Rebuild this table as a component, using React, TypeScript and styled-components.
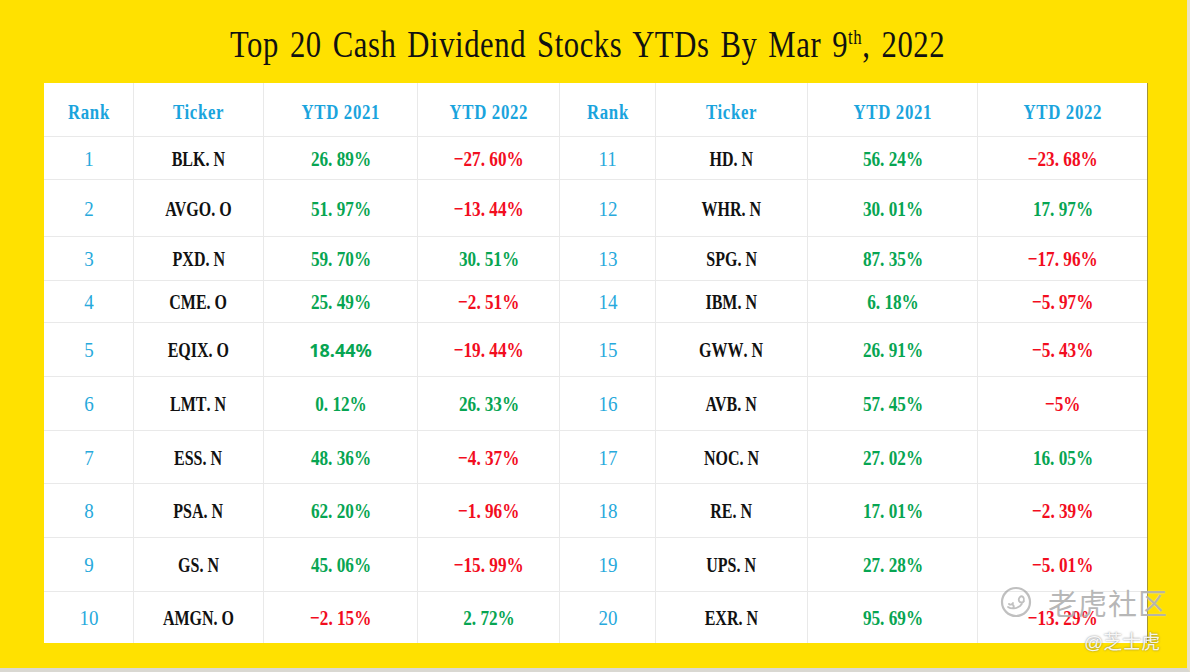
import React from 'react';
import styled, { createGlobalStyle } from 'styled-components';

type Kind = 'head' | 'rank' | 'ticker' | 'up' | 'down';

interface CellData {
  text: string;
  kind: Kind;
  plain?: boolean;
}

const GlobalStyle = createGlobalStyle`
  html, body {
    margin: 0;
    padding: 0;
    background: #ffe100;
  }
  * {
    box-sizing: border-box;
  }
`;

const colWidths = [90, 130, 154, 142, 96, 152, 170, 169];
const rowHeights = [54, 43, 57, 44, 42, 54, 54, 53, 54, 54, 51];

const heads = ['Rank', 'Ticker', 'YTD 2021', 'YTD 2022'];

const left: [string, string, string, string][] = [
  ['1', 'BLK.N', '26.89%', '-27.60%'],
  ['2', 'AVGO.O', '51.97%', '-13.44%'],
  ['3', 'PXD.N', '59.70%', '30.51%'],
  ['4', 'CME.O', '25.49%', '-2.51%'],
  ['5', 'EQIX.O', '18.44%', '-19.44%'],
  ['6', 'LMT.N', '0.12%', '26.33%'],
  ['7', 'ESS.N', '48.36%', '-4.37%'],
  ['8', 'PSA.N', '62.20%', '-1.96%'],
  ['9', 'GS.N', '45.06%', '-15.99%'],
  ['10', 'AMGN.O', '-2.15%', '2.72%'],
];

const right: [string, string, string, string][] = [
  ['11', 'HD.N', '56.24%', '-23.68%'],
  ['12', 'WHR.N', '30.01%', '17.97%'],
  ['13', 'SPG.N', '87.35%', '-17.96%'],
  ['14', 'IBM.N', '6.18%', '-5.97%'],
  ['15', 'GWW.N', '26.91%', '-5.43%'],
  ['16', 'AVB.N', '57.45%', '-5%'],
  ['17', 'NOC.N', '27.02%', '16.05%'],
  ['18', 'RE.N', '17.01%', '-2.39%'],
  ['19', 'UPS.N', '27.28%', '-5.01%'],
  ['20', 'EXR.N', '95.69%', '-13.29%'],
];

const pct = (v: string): CellData => ({
  text: v.replace('-', '\u2212'),
  kind: v.startsWith('-') ? 'down' : 'up',
});

const half = (r: [string, string, string, string]): CellData[] => [
  { text: r[0], kind: 'rank' },
  { text: r[1], kind: 'ticker' },
  pct(r[2]),
  pct(r[3]),
];

const rows: CellData[][] = [
  [...heads, ...heads].map((h) => ({ text: h, kind: 'head' as Kind })),
  ...left.map((r, i) => [...half(r), ...half(right[i])]),
];
// the 18.44% cell is typed in a different font in the source sheet
rows[5][2].plain = true;

const colors: Record<Kind, string> = {
  head: '#1aa4dd',
  rank: '#27a9dc',
  ticker: '#111111',
  up: '#07a552',
  down: '#f20d1e',
};

// the sheet font is a narrow, tall serif; squeeze Times to match
const squeeze: Record<Kind, string> = {
  head: 'scale(0.84, 1.08)',
  rank: 'scale(0.95, 1.08)',
  ticker: 'scale(0.8, 1.08)',
  up: 'scale(0.86, 1.1)',
  down: 'scale(0.86, 1.1)',
};

const Page = styled.div`
  position: relative;
  width: 1190px;
  height: 672px;
  display: flex;
  flex-direction: column;
  background: #ffe100;
  border-right: 3px solid #e9e2c9;
  border-bottom: 4px solid #d9d8d2;
  overflow: hidden;
`;

const TitleBar = styled.div`
  height: 83px;
  display: flex;
  align-items: center;
  justify-content: center;
  padding: 8px 12px 0 0;
`;

const Title = styled.h1`
  margin: 0;
  font-family: 'Liberation Serif', 'Times New Roman', serif;
  font-weight: normal;
  font-size: 33px;
  color: #111;
  letter-spacing: 0.6px;
  word-spacing: 3px;
  transform: scale(0.93, 1.14);

  sup {
    font-size: 18px;
    vertical-align: 12px;
    line-height: 0;
  }
`;

const Sheet = styled.div`
  margin-left: 44px;
  width: 1104px;
  display: grid;
  background: #ffffff;
  border-right: 1px solid #a39437;
`;

const Cell = styled.div<{ $kind: Kind; $lastCol: boolean; $lastRow: boolean; $plain?: boolean }>`
  display: flex;
  align-items: center;
  justify-content: center;
  padding-top: ${(p) => (p.$kind === 'head' ? '4px' : '0')};
  border-right: ${(p) => (p.$lastCol ? 'none' : '1px solid #e9e9e9')};
  border-bottom: ${(p) => (p.$lastRow ? 'none' : '1px solid #e9e9e9')};
  color: ${(p) => colors[p.$kind]};
  font-family: ${(p) =>
    p.$plain ? "'Noto Sans', 'Liberation Sans', sans-serif" : "'Liberation Serif', 'Times New Roman', serif"};
  font-size: ${(p) => (p.$plain ? '18px' : '20px')};
  font-weight: ${(p) => (p.$kind === 'rank' ? 'normal' : p.$plain ? 700 : 'bold')};
  letter-spacing: ${(p) => (p.$kind === 'head' ? '0.8px' : '0')};
  white-space: nowrap;
`;

const Label = styled.span<{ $kind: Kind; $plain?: boolean }>`
  display: inline-block;
  transform: ${(p) => (p.$plain ? 'none' : squeeze[p.$kind])};
`;

const Dot = styled.span`
  display: inline-block;
  width: 10px;
`;

const Watermark = styled.div`
  position: absolute;
  left: 1000px;
  top: 586px;
  display: flex;
  align-items: center;
  gap: 14px;
  pointer-events: none;
`;

const MarkText = styled.span`
  font-family: 'Noto Sans CJK SC', sans-serif;
  font-size: 29px;
  line-height: 32px;
  letter-spacing: 1px;
  color: rgba(135, 135, 135, 0.6);
  text-shadow: 0 0 1px rgba(255, 255, 255, 0.9);
`;

const Handle = styled.span`
  position: absolute;
  left: 1084px;
  top: 630px;
  font-family: 'Liberation Sans', 'Noto Sans CJK SC', sans-serif;
  font-size: 19px;
  line-height: 26px;
  color: rgba(255, 255, 255, 0.92);
  text-shadow: 0 0 2px rgba(90, 90, 90, 0.8);
`;

const Text = ({ value, plain }: { value: string; plain?: boolean }) => {
  if (plain || !value.includes('.')) return <>{value}</>;
  const [a, b] = value.split('.');
  return (
    <>
      {a}
      <Dot>.</Dot>
      {b}
    </>
  );
};

const TigerLogo = () => (
  <svg width="34" height="32" viewBox="0 0 34 32" fill="none">
    <circle cx="16" cy="16" r="14" stroke="rgba(150,150,150,0.6)" strokeWidth="2.2" />
    <path
      d="M8 21c3 2 8 2 12-1 3-3 5-7 3-9-2-2-5 1-4 4 1 2 4 2 5 0M9 18c1 1 3 1 4-1M13 22c1-1 1-2 0-3"
      stroke="rgba(150,150,150,0.6)"
      strokeWidth="1.8"
      strokeLinecap="round"
    />
  </svg>
);

export default function App() {
  return (
    <>
      <GlobalStyle />
      <Page>
        <TitleBar>
          <Title>
            Top 20 Cash Dividend Stocks YTDs By Mar 9<sup>th</sup>, 2022
          </Title>
        </TitleBar>
        <Sheet
          style={{
            gridTemplateColumns: colWidths.map((w) => `${w}px`).join(' '),
            gridTemplateRows: rowHeights.map((h) => `${h}px`).join(' '),
          }}
        >
          {rows.map((row, ri) =>
            row.map((c, ci) => (
              <Cell
                key={`${ri}-${ci}`}
                $kind={c.kind}
                $plain={c.plain}
                $lastCol={ci === row.length - 1}
                $lastRow={ri === rows.length - 1}
              >
                <Label $kind={c.kind} $plain={c.plain}>
                  <Text value={c.text} plain={c.plain} />
                </Label>
              </Cell>
            ))
          )}
        </Sheet>
        <Watermark>
          <TigerLogo />
          <MarkText>老虎社区</MarkText>
        </Watermark>
        <Handle>@芝士虎</Handle>
      </Page>
    </>
  );
}
